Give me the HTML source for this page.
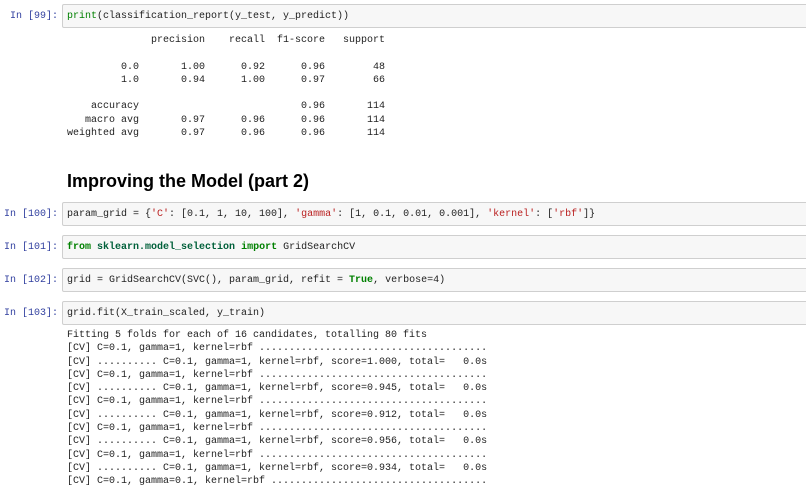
<!DOCTYPE html>
<html><head><meta charset="utf-8"><style>
body{margin:0;width:806px;height:483px;overflow:hidden;background:#fff;position:relative;font-family:"Liberation Mono",monospace;font-size:10px;color:#222}
.p{position:absolute;right:748px;color:#303f9f;line-height:14px;white-space:pre}
.box{position:absolute;left:62px;right:-2px;background:#f7f7f7;border:1px solid #cfcfcf;border-radius:2px}
.box pre{margin:0;position:absolute;left:4px;top:6px;line-height:14px;font:inherit}
pre.o{position:absolute;left:67px;margin:0;font:inherit;line-height:13.3px;white-space:pre}
.g{color:#008000;font-weight:bold}.s{color:#ba2121}.b{color:#008000}
h2{position:absolute;left:67px;top:171px;margin:0;font:bold 18px "Liberation Sans",sans-serif;color:#000}
</style></head><body>
<div class="p" style="top:10px">In [99]:</div>
<div class="box" style="top:4px;height:22px"><pre><span class="b">print</span>(classification_report(y_test, y_predict))</pre></div>
<pre class="o" style="top:34px">              precision    recall  f1-score   support

         0.0       1.00      0.92      0.96        48
         1.0       0.94      1.00      0.97        66

    accuracy                           0.96       114
   macro avg       0.97      0.96      0.96       114
weighted avg       0.97      0.96      0.96       114</pre>
<h2>Improving the Model (part 2)</h2>
<div class="p" style="top:208px">In [100]:</div>
<div class="box" style="top:202px;height:22px"><pre>param_grid = {<span class="s">'C'</span>: [0.1, 1, 10, 100], <span class="s">'gamma'</span>: [1, 0.1, 0.01, 0.001], <span class="s">'kernel'</span>: [<span class="s">'rbf'</span>]}</pre></div>
<div class="p" style="top:241px">In [101]:</div>
<div class="box" style="top:235px;height:22px"><pre><span class="g">from</span> <span style="color:#00603a;font-weight:bold">sklearn.model_selection</span> <span class="g">import</span> GridSearchCV</pre></div>
<div class="p" style="top:274px">In [102]:</div>
<div class="box" style="top:268px;height:22px"><pre>grid = GridSearchCV(SVC(), param_grid, refit = <span class="g">True</span>, verbose=4)</pre></div>
<div class="p" style="top:307px">In [103]:</div>
<div class="box" style="top:301px;height:22px"><pre>grid.fit(X_train_scaled, y_train)</pre></div>
<pre class="o" style="top:329px">Fitting 5 folds for each of 16 candidates, totalling 80 fits
[CV] C=0.1, gamma=1, kernel=rbf ......................................
[CV] .......... C=0.1, gamma=1, kernel=rbf, score=1.000, total=   0.0s
[CV] C=0.1, gamma=1, kernel=rbf ......................................
[CV] .......... C=0.1, gamma=1, kernel=rbf, score=0.945, total=   0.0s
[CV] C=0.1, gamma=1, kernel=rbf ......................................
[CV] .......... C=0.1, gamma=1, kernel=rbf, score=0.912, total=   0.0s
[CV] C=0.1, gamma=1, kernel=rbf ......................................
[CV] .......... C=0.1, gamma=1, kernel=rbf, score=0.956, total=   0.0s
[CV] C=0.1, gamma=1, kernel=rbf ......................................
[CV] .......... C=0.1, gamma=1, kernel=rbf, score=0.934, total=   0.0s
[CV] C=0.1, gamma=0.1, kernel=rbf ....................................</pre>
</body></html>
